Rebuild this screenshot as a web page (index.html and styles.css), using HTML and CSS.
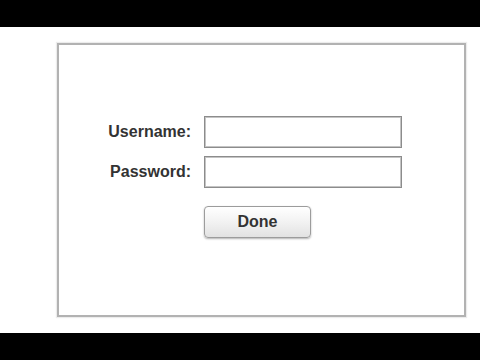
FILE: index.html
```html
<!DOCTYPE html>
<html>
<head>
<meta charset="utf-8">
<link rel="stylesheet" href="styles.css">
</head>
<body>
<div class="bar"></div>
<main class="stage">
  <section class="panel">
    <form class="login">
      <label class="label" for="u">Username:</label>
      <input class="field" id="u" type="text">
      <label class="label" for="p">Password:</label>
      <input class="field" id="p" type="password">
      <button class="done" type="button">Done</button>
    </form>
  </section>
</main>
<div class="bar"></div>
</body>
</html>
```
FILE: styles.css
```css
* { box-sizing: border-box; }
html, body { margin: 0; padding: 0; }
body {
  width: 480px;
  height: 360px;
  display: flex;
  flex-direction: column;
  background: #fff;
  font-family: "Liberation Sans", Arial, sans-serif;
  overflow: hidden;
}
.bar {
  height: 27px;
  flex: none;
  background: #000;
}
.stage {
  flex: 1;
  display: flex;
  padding: 16px 14px 16px 57px;
}
.panel {
  flex: 1;
  border: 2px solid #b2b2b2;
  box-shadow: 0 0 1px 1px #ececec;
  background: #fff;
  padding: 71px 0 0 46px;
}
.login {
  display: grid;
  grid-template-columns: 86px 198px;
  grid-auto-rows: 32px;
  column-gap: 13px;
  row-gap: 8px;
}
.label {
  align-self: center;
  text-align: right;
  font-weight: bold;
  font-size: 16px;
  color: #333;
  white-space: nowrap;
}
.field {
  appearance: none;
  -webkit-appearance: none;
  margin: 0;
  height: 32px;
  width: 198px;
  border: 1px solid #8c8c8c;
  box-shadow: inset 0 0 0 1px #c4c4c4;
  background: #fff;
  border-radius: 0;
  outline: none;
}
.done {
  grid-column: 2;
  justify-self: start;
  margin-top: 10px;
  width: 107px;
  height: 32px;
  border: 1px solid #9c9c9c;
  border-radius: 4px;
  background: linear-gradient(#ffffff, #f2f2f2 50%, #e2e2e2);
  box-shadow: 0 1px 2px rgba(0, 0, 0, 0.3);
  font-family: "Liberation Sans", Arial, sans-serif;
  font-weight: bold;
  font-size: 16px;
  color: #333;
  padding: 0;
}
```
